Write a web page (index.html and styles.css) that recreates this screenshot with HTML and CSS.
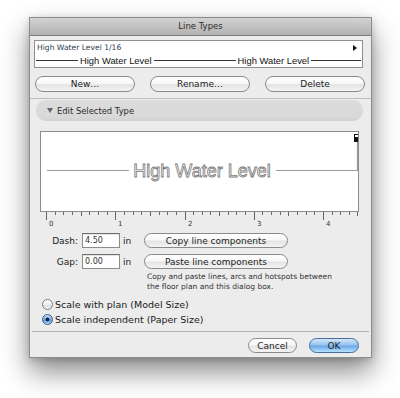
FILE: index.html
```html
<!DOCTYPE html>
<html>
<head>
<meta charset="utf-8">
<title>Line Types</title>
<link rel="stylesheet" href="styles.css">
</head>
<body>
<div class="window">
  <div class="titlebar">Line Types</div>
  <div class="content">
    <div class="list">
      <div class="list-top">
        <span class="list-name">High Water Level 1/16</span>
        <svg class="list-arrow" width="4" height="6" viewBox="0 0 4 6"><path d="M0 0L4 3L0 6Z" fill="#111"/></svg>
      </div>
      <div class="list-line">
        <span class="seg s1"></span><span class="lt">High Water Level</span><span class="seg s2"></span><span class="lt">High Water Level</span><span class="seg s3"></span>
      </div>
    </div>

    <div class="btnrow">
      <button class="btn wide">New…</button>
      <button class="btn wide">Rename…</button>
      <button class="btn wide">Delete</button>
    </div>

    <div class="sep"></div>

    <div class="disclosure">
      <svg class="tri" width="6" height="5" viewBox="0 0 6 5"><path d="M0 0H6L3 5Z" fill="#666"/></svg>
      <span>Edit Selected Type</span>
    </div>

    <div class="preview">
      <svg width="317" height="79" viewBox="0 0 317 79">
        <path d="M6 38.5H88M235 38.5H316.5V9" stroke="#9a9a9a" stroke-width="1.2" fill="none"/>
        <text x="161" y="44.5" text-anchor="middle" class="pvtext">High Water Level</text>
        <rect x="313" y="2" width="5" height="8" fill="#111"/>
        <rect x="314" y="3" width="3" height="2" fill="#fff"/>
      </svg>
    </div>

    <svg class="ruler" width="320" height="17" viewBox="0 0 320 17">
      <path stroke="#666" stroke-width="1" fill="none" d="M15.5 0v3M23.5 0v3M32.5 0v3M49.5 0v3M58.5 0v3M67.5 0v3M84.5 0v3M93.5 0v3M101.5 0v3M119.5 0v3M127.5 0v3M136.5 0v3M153.5 0v3M162.5 0v3M170.5 0v3M188.5 0v3M196.5 0v3M205.5 0v3M222.5 0v3M231.5 0v3M240.5 0v3M257.5 0v3M266.5 0v3M274.5 0v3M292.5 0v3M300.5 0v3M309.5 0v3M41.5 0v4M110.5 0v4M179.5 0v4M248.5 0v4M317.5 0v4M6.5 0v8M75.5 0v8M145.5 0v8M214.5 0v8M283.5 0v8"/>
      <g class="rnum">
        <text x="9" y="14">0</text>
        <text x="78" y="14">1</text>
        <text x="148" y="14">2</text>
        <text x="217" y="14">3</text>
        <text x="286" y="14">4</text>
      </g>
    </svg>

    <div class="fields">
      <div class="field">
        <label class="flabel" for="dash">Dash:</label>
        <input class="finput" id="dash" type="text" value="4.50">
        <span class="funit">in</span>
        <button class="btn long">Copy line components</button>
      </div>
      <div class="field">
        <label class="flabel" for="gap">Gap:</label>
        <input class="finput" id="gap" type="text" value="0.00">
        <span class="funit">in</span>
        <button class="btn long">Paste line components</button>
      </div>
    </div>

    <p class="help">Copy and paste lines, arcs and hotspots between<br>the floor plan and this dialog box.</p>

    <div class="radios">
      <div class="radio"><span class="rb"></span><span>Scale with plan (Model Size)</span></div>
      <div class="radio"><span class="rb on"></span><span>Scale independent (Paper Size)</span></div>
    </div>

    <div class="sep2"></div>

    <div class="actions">
      <button class="btn cancel">Cancel</button>
      <button class="btn ok">OK</button>
    </div>
  </div>
</div>
</body>
</html>
```

FILE: styles.css
```css
html, body {
  margin: 0;
  background: #ffffff;
}
body {
  width: 400px;
  height: 398px;
  overflow: hidden;
  box-sizing: border-box;
  padding: 17px 0 0 29px;
  font-family: "DejaVu Sans", "Liberation Sans", sans-serif;
  color: #1a1a1a;
}
.window {
  width: 343px;
  height: 341px;
  box-sizing: border-box;
  border: 1px solid #8c8c8c;
  background: #ececec;
  box-shadow: 0 14px 26px rgba(0, 0, 0, 0.45), 0 2px 8px rgba(0, 0, 0, 0.18);
  display: flex;
  flex-direction: column;
}
.titlebar {
  height: 17px;
  border-bottom: 1px solid #7e7e7e;
  background: linear-gradient(#d2d2d2, #b2b2b2);
  text-align: center;
  font-size: 8.5px;
  line-height: 17px;
  color: #2b2b2b;
}
.content {
  padding: 4px 8px 0 4px;
  display: flex;
  flex-direction: column;
}

/* line list */
.list {
  height: 28px;
  box-sizing: border-box;
  border: 1px solid #8f8f8f;
  background: #fff;
  display: flex;
  flex-direction: column;
}
.list-top {
  display: flex;
  justify-content: space-between;
  align-items: center;
  height: 13px;
  padding: 0 5px 0 2px;
  font-size: 7.6px;
  color: #2e3a52;
}
.list-arrow { display: block; }
.list-line {
  display: flex;
  align-items: center;
  height: 13px;
  padding: 0 1px;
}
.seg { height: 1px; background: #333; }
.s1 { width: 42px; }
.s2 { width: 82px; }
.s3 { flex: 1; }
.lt {
  font-family: "Liberation Sans", Arial, sans-serif;
  font-size: 9.4px;
  color: #111;
  padding: 0 2px;
  white-space: nowrap;
}

/* buttons */
.btn {
  box-sizing: border-box;
  border: 1px solid #8a8a8a;
  border-radius: 8px;
  background: linear-gradient(#ffffff 0%, #f8f8f8 45%, #e4e4e4 55%, #f4f4f4 100%);
  font-family: "DejaVu Sans", sans-serif;
  font-size: 9px;
  color: #1d1d1d;
  padding: 0;
  margin: 0;
}
.btnrow {
  display: flex;
  justify-content: space-between;
  margin: 8px -2px 0 1px;
}
.btn.wide { width: 100px; height: 16px; }

.sep {
  height: 1px;
  background: #bdbdbd;
  margin: 6px -8px 0 -4px;
}

/* disclosure */
.disclosure {
  margin: 1px 0 0 2px;
  height: 21px;
  border-radius: 10px;
  background: linear-gradient(#dcdcdc, #d9d9d9 80%, #d1d1d1);
  display: flex;
  align-items: center;
  padding-left: 11px;
  gap: 4px;
  font-size: 8.4px;
  color: #2a2a2a;
}
.tri { display: block; }

/* preview */
.preview {
  margin: 10px 0 0 6px;
  width: 319px;
  height: 81px;
  box-sizing: border-box;
  border: 1px solid #8c8c8c;
  background: #fff;
}
.preview svg { display: block; }
.pvtext {
  font-family: "Liberation Sans", Arial, sans-serif;
  font-size: 18px;
  fill: #fff;
  stroke: #7a7a7a;
  stroke-width: 0.8;
}

/* ruler */
.ruler {
  display: block;
  margin-left: 6px;
}
.rnum text {
  font-family: "DejaVu Sans", sans-serif;
  font-size: 7px;
  fill: #333;
}

/* fields */
.fields {
  margin-top: 4px;
  display: flex;
  flex-direction: column;
  gap: 6px;
}
.field {
  display: flex;
  align-items: center;
  height: 15px;
}
.flabel {
  width: 44px;
  margin-right: 4px;
  text-align: right;
  font-size: 9px;
}
.finput {
  width: 38px;
  height: 15px;
  box-sizing: border-box;
  border: 1px solid #8c8c8c;
  border-top-color: #6e6e6e;
  background: #fff;
  font-family: "DejaVu Sans", sans-serif;
  font-size: 8px;
  color: #333;
  padding: 0 0 0 2px;
  margin: 0;
  box-shadow: inset 0 1px 1px rgba(0, 0, 0, 0.12);
  outline: none;
}
.funit {
  width: 24px;
  padding-left: 3px;
  box-sizing: border-box;
  font-size: 9px;
}
.btn.long { width: 144px; height: 15px; }

.help {
  margin: 3px 0 0 113px;
  font-size: 7.5px;
  line-height: 10px;
  color: #333;
}

/* radios */
.radios {
  margin: 6px 0 0 8px;
  display: flex;
  flex-direction: column;
  gap: 3px;
}
.radio {
  display: flex;
  align-items: center;
  height: 12px;
  font-size: 9.5px;
}
.rb {
  width: 11px;
  height: 11px;
  box-sizing: border-box;
  border-radius: 50%;
  border: 1px solid #7d7d7d;
  background: linear-gradient(#ffffff, #f0f0f0 50%, #dadada 55%, #f6f6f6);
  margin-right: 2px;
  flex: none;
}
.rb.on {
  border-color: #3d5e8c;
  background: radial-gradient(circle, #16243b 0, #16243b 1.6px, transparent 2.3px),
              linear-gradient(#c3ddf7, #7fb0e6 48%, #5c98de 55%, #a9d4f7);
}

.sep2 {
  height: 1px;
  background: #b0b0b0;
  margin: 6px -6px 0 -2px;
}

.actions {
  display: flex;
  justify-content: flex-end;
  gap: 12px;
  margin: 6px 4px 0 0;
}
.btn.cancel { width: 49px; height: 15px; }
.btn.ok {
  width: 50px;
  height: 15px;
  border-color: #4a6d9c;
  background: linear-gradient(#d2e6fb 0%, #97c3f0 45%, #6ca8ea 55%, #b5e2fb 100%);
}
```
